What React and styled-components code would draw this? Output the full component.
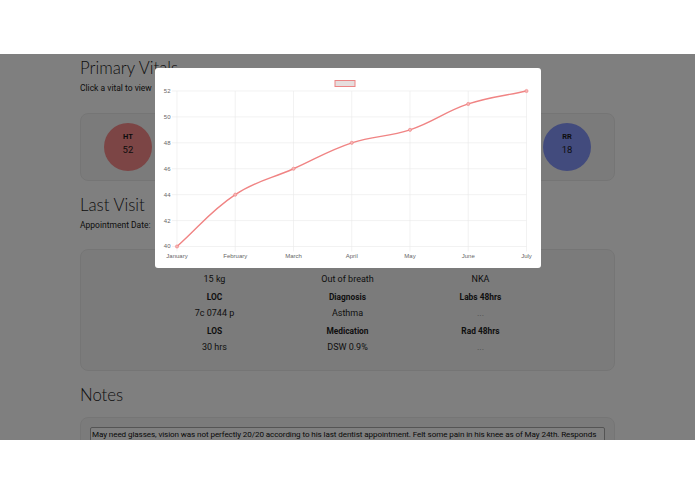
import React from 'react';
import styled, { createGlobalStyle } from 'styled-components';

const Global = createGlobalStyle`
  html, body { margin: 0; padding: 0; background: #fff; }
  body { font-family: Roboto, "Liberation Sans", Arial, sans-serif; color: #333; }
  * { box-sizing: border-box; }
`;

const TopBand = styled.div`
  height: 54px;
  background: #fff;
`;

const Viewport = styled.div`
  position: relative;
  height: 386px;
  overflow: hidden;
  background: #fff;
`;

const Container = styled.main`
  margin-left: 80px;
  width: 535px;
  padding-top: 4px;
`;

const Title = styled.h2`
  margin: ${p => (p.$mt ?? 14)}px 0 0;
  font-family: Lato, "Open Sans", sans-serif;
  font-weight: 300;
  font-size: 16.8px;
  line-height: 20px;
  color: #222;
`;

const Sub = styled.p`
  margin: 4px 0 0;
  font-size: 8.5px;
  line-height: 12px;
  color: #222;
`;

const Card = styled.section`
  margin-top: ${p => p.$mt || 18}px;
  background: #f6f6f6;
  border: 1px solid #ebebeb;
  border-radius: 8px;
`;

const VitalsRow = styled.div`
  display: flex;
  justify-content: space-around;
  padding: 9px 3px;
`;

const Vital = styled.div`
  width: 48px;
  height: 48px;
  border-radius: 50%;
  background: ${p => p.$color};
  display: flex;
  flex-direction: column;
  align-items: center;
  justify-content: center;
  padding-bottom: 4px;
  color: #1a1a1a;
`;

const VitalName = styled.div`
  font-size: 7.5px;
  font-weight: 700;
  line-height: 10px;
`;

const VitalValue = styled.div`
  font-size: 9.5px;
  line-height: 16px;
`;

const VisitGrid = styled.div`
  display: grid;
  grid-template-columns: repeat(3, 133px);
  justify-content: center;
  padding: 8px 0 10px;
`;

const Pair = styled.div`
  display: flex;
  flex-direction: column;
  align-items: center;
  margin-bottom: 4px;
`;

const Label = styled.div`
  font-size: 8.4px;
  font-weight: 700;
  line-height: 10px;
  margin-bottom: 3px;
  color: #1e1e1e;
`;

const Value = styled.div`
  font-size: 9px;
  line-height: 17px;
  color: ${p => (p.$muted ? '#9a9a9a' : '#1e1e1e')};
`;

const NotesCard = styled(Card)`
  padding: 9px;
  height: 80px;
`;

const NoteBox = styled.textarea`
  display: block;
  width: 100%;
  height: 60px;
  border: 1px solid #a9a9a9;
  border-radius: 2px;
  background: #fff;
  padding: 1px 1px;
  resize: none;
  font-family: Roboto, "Liberation Sans", Arial, sans-serif;
  font-size: 8.1px;
  letter-spacing: -0.1px;
  line-height: 11px;
  color: #111;
  overflow: hidden;
`;

const Overlay = styled.div`
  position: absolute;
  inset: 0;
  background: rgba(0, 0, 0, 0.5);
  display: flex;
  justify-content: center;
  align-items: flex-start;
  padding-top: 14px;
`;

const Modal = styled.div`
  width: 386px;
  height: 200px;
  background: #fff;
  border-radius: 3px;
  overflow: hidden;
`;

const ChartSvg = styled.svg`
  display: block;
  font-family: "Liberation Sans", Arial, sans-serif;
`;

const vitals = [
  { name: 'HT', value: '52', color: '#f88a8a' },
  { name: 'WT', value: '15', color: '#9fd59f' },
  { name: 'BP', value: '120/80', color: '#ffd59c' },
  { name: 'HR', value: '98', color: '#9cd5ff' },
  { name: 'TEMP', value: '37', color: '#e0a0ff' },
  { name: 'RR', value: '18', color: '#8596fa' },
];

const visit = [
  ['Weight', '15 kg'],
  ['Chief Complaint', 'Out of breath'],
  ['Allergies', 'NKA'],
  ['LOC', '7c 0744 p'],
  ['Diagnosis', 'Asthma'],
  ['Labs 48hrs', '...'],
  ['LOS', '30 hrs'],
  ['Medication', 'DSW 0.9%'],
  ['Rad 48hrs', '...'],
];

const months = ['January', 'February', 'March', 'April', 'May', 'June', 'July'];
const data = [40, 44, 46, 48, 49, 51, 52];
const X0 = 22;
const DX = 58.25;
const Y52 = 23;
const DY = 12.958;
const xAt = i => X0 + i * DX;
const yAt = v => Y52 + (52 - v) * DY;

function linePath(pts, t = 0.4) {
  const ctrl = pts.map((p, i) => {
    const prev = pts[i - 1] || p;
    const next = pts[i + 1] || p;
    const d01 = Math.hypot(p.x - prev.x, p.y - prev.y);
    const d12 = Math.hypot(next.x - p.x, next.y - p.y);
    const s01 = d01 / (d01 + d12) || 0;
    const s12 = d12 / (d01 + d12) || 0;
    return {
      c1: { x: p.x - t * s01 * (next.x - prev.x), y: p.y - t * s01 * (next.y - prev.y) },
      c2: { x: p.x + t * s12 * (next.x - prev.x), y: p.y + t * s12 * (next.y - prev.y) },
    };
  });
  let d = `M${pts[0].x},${pts[0].y}`;
  for (let i = 1; i < pts.length; i++) {
    const a = ctrl[i - 1].c2;
    const b = ctrl[i].c1;
    d += ` C${a.x},${a.y} ${b.x},${b.y} ${pts[i].x},${pts[i].y}`;
  }
  return d;
}

function Chart() {
  const pts = data.map((v, i) => ({ x: xAt(i), y: yAt(v) }));
  const ticks = [52, 50, 48, 46, 44, 42, 40];
  const right = xAt(6);
  const bottom = yAt(40);
  return (
    <ChartSvg width="386" height="200" viewBox="0 0 386 200">
      <rect x="180" y="12.5" width="20" height="6" fill="#e6dddd" stroke="#ec8585" strokeWidth="1" />
      {ticks.map(v => (
        <g key={v}>
          <line x1="17" x2={right} y1={yAt(v)} y2={yAt(v)} stroke="#e9e9e9" strokeWidth="0.6" />
          <text x="15.5" y={yAt(v) + 2} fontSize="6" fill="#666" textAnchor="end">{v}</text>
        </g>
      ))}
      {months.map((m, i) => (
        <g key={m}>
          <line x1={xAt(i)} x2={xAt(i)} y1={Y52} y2={bottom + 5} stroke="#e9e9e9" strokeWidth="0.6" />
          <text x={xAt(i)} y="190" fontSize="6" fill="#666" textAnchor="middle">{m}</text>
        </g>
      ))}
      <path d={linePath(pts)} fill="none" stroke="#f08484" strokeWidth="1.4" />
      {pts.map((p, i) => (
        <circle key={i} cx={p.x} cy={p.y} r="1.6" fill="#f6b4b4" stroke="#ee8080" strokeWidth="0.6" />
      ))}
    </ChartSvg>
  );
}

export default function App() {
  return (
    <>
      <Global />
      <TopBand />
      <Viewport>
        <Container>
          <Title $mt={0}>Primary Vitals</Title>
          <Sub>Click a vital to view</Sub>
          <Card $mt={19}>
            <VitalsRow>
              {vitals.map(v => (
                <Vital key={v.name} $color={v.color}>
                  <VitalName>{v.name}</VitalName>
                  <VitalValue>{v.value}</VitalValue>
                </Vital>
              ))}
            </VitalsRow>
          </Card>
          <Title>Last Visit</Title>
          <Sub>Appointment Date:</Sub>
          <Card>
            <VisitGrid>
              {visit.map(([l, v]) => (
                <Pair key={l}>
                  <Label>{l}</Label>
                  <Value $muted={v === '...'}>{v}</Value>
                </Pair>
              ))}
            </VisitGrid>
          </Card>
          <Title $mt={14}>Notes</Title>
          <NotesCard $mt={12}>
            <NoteBox
              readOnly
              defaultValue="May need glasses, vision was not perfectly 20/20 according to his last dentist appointment. Felt some pain in his knee as of May 24th. Responds well to treatment and follow up is scheduled."
            />
          </NotesCard>
        </Container>
        <Overlay>
          <Modal>
            <Chart />
          </Modal>
        </Overlay>
      </Viewport>
    </>
  );
}
